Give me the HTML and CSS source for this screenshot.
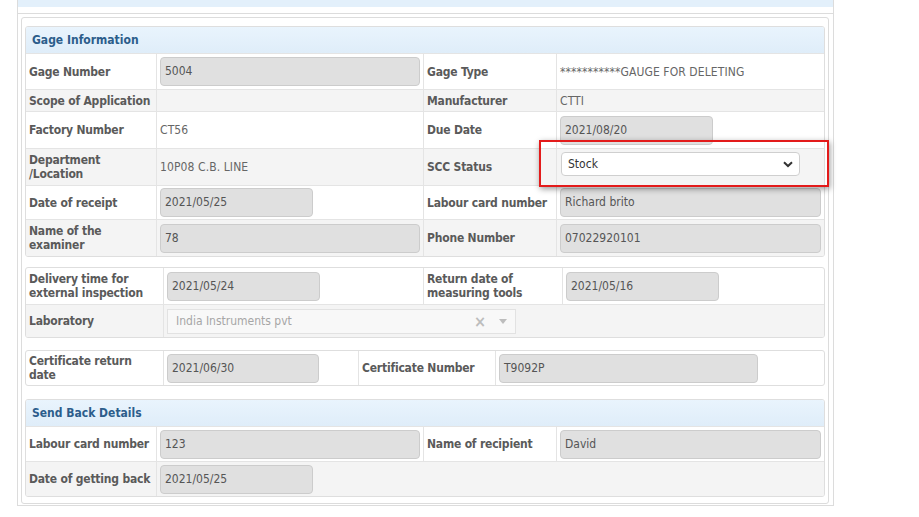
FILE: index.html
```html
<!DOCTYPE html>
<html>
<head>
<meta charset="utf-8">
<title>Gage Information</title>
<link rel="stylesheet" href="styles.css">
</head>
<body>
<div class="panel">
  <div class="panel-head"></div>
  <div class="panel-body">
    <div class="inner">

      <div class="box">
        <table class="grid">
          <colgroup><col class="w130"><col class="w267"><col class="w133"><col></colgroup>
          <tr class="hd"><th colspan="4">Gage Information</th></tr>
          <tr class="h36">
            <td class="lb">Gage Number</td>
            <td><div class="inp">5004</div></td>
            <td class="lb">Gage Type</td>
            <td class="tx">***********GAUGE FOR DELETING</td>
          </tr>
          <tr class="alt h22">
            <td class="lb nw">Scope of Application</td>
            <td class="tx"></td>
            <td class="lb">Manufacturer</td>
            <td class="tx">CTTI</td>
          </tr>
          <tr class="h37">
            <td class="lb">Factory Number</td>
            <td class="tx">CT56</td>
            <td class="lb">Due Date</td>
            <td><div class="inp date">2021/08/20</div></td>
          </tr>
          <tr class="alt h37">
            <td class="lb">Department<br>/Location</td>
            <td class="tx">10P08 C.B. LINE</td>
            <td class="lb">SCC Status</td>
            <td class="top"><div class="sel">Stock<svg class="chev" viewBox="0 0 10 7" width="10" height="7"><path d="M1 1.2 L5 5 L9 1.2" fill="none" stroke="#333" stroke-width="2"/></svg></div></td>
          </tr>
          <tr class="h34">
            <td class="lb">Date of receipt</td>
            <td><div class="inp date">2021/05/25</div></td>
            <td class="lb nw">Labour card number</td>
            <td><div class="inp">Richard brito</div></td>
          </tr>
          <tr class="alt h37">
            <td class="lb">Name of the<br>examiner</td>
            <td><div class="inp">78</div></td>
            <td class="lb">Phone Number</td>
            <td><div class="inp">07022920101</div></td>
          </tr>
        </table>
      </div>

      <div class="box gap10">
        <table class="grid">
          <colgroup><col class="w137"><col class="w260"><col class="w139"><col></colgroup>
          <tr class="h36 first">
            <td class="lb">Delivery time for<br>external inspection</td>
            <td><div class="inp date">2021/05/24</div></td>
            <td class="lb">Return date of<br>measuring tools</td>
            <td><div class="inp date">2021/05/16</div></td>
          </tr>
          <tr class="alt h33">
            <td class="lb">Laboratory</td>
            <td colspan="3">
              <div class="lab">
                <span class="lab-text">India Instruments pvt</span>
                <span class="lab-x">×</span>
                <span class="lab-arrow"></span>
              </div>
            </td>
          </tr>
        </table>
      </div>

      <div class="box gap12">
        <table class="grid">
          <colgroup><col class="w137"><col class="w195"><col class="w137"><col></colgroup>
          <tr class="h34 first">
            <td class="lb">Certificate return<br>date</td>
            <td><div class="inp wide">2021/06/30</div></td>
            <td class="lb nw">Certificate Number</td>
            <td><div class="inp cert">T9092P</div></td>
          </tr>
        </table>
      </div>

      <div class="box gap13">
        <table class="grid">
          <colgroup><col class="w130"><col class="w267"><col class="w133"><col></colgroup>
          <tr class="hd"><th colspan="4">Send Back Details</th></tr>
          <tr class="h35">
            <td class="lb nw">Labour card number</td>
            <td><div class="inp">123</div></td>
            <td class="lb">Name of recipient</td>
            <td><div class="inp">David</div></td>
          </tr>
          <tr class="alt h35">
            <td class="lb nw">Date of getting back</td>
            <td colspan="3"><div class="inp date">2021/05/25</div></td>
          </tr>
        </table>
      </div>

    </div>
  </div>
</div>
<div class="highlight"></div>
</body>
</html>
```

FILE: styles.css
```css
* { box-sizing: border-box; }

body {
  margin: 0;
  background: #ffffff;
  font-family: "DejaVu Sans Condensed", "DejaVu Sans", sans-serif;
  font-stretch: semi-condensed;
  font-size: 12px;
  color: #5a5a5a;
}

.panel {
  margin-left: 17px;
  width: 817px;
  border: 1px solid #dcdcdc;
  border-top: 0;
}

.panel-head {
  height: 7px;
  background: #e3f0fb;
}

.panel-body {
  margin-top: 6px;
  border-top: 1px solid #dcdcdc;
  padding-top: 3px;
  padding-bottom: 1px;
}

.inner {
  margin-left: 3px;
  width: 808px;
  border: 1px solid #dcdcdc;
  border-radius: 3px;
  padding: 8px 3px 6px 3px;
}

.box {
  border: 1px solid #dedede;
  border-radius: 3px;
  overflow: hidden;
}
.gap10 { margin-top: 10px; }
.gap12 { margin-top: 12px; }
.gap13 { margin-top: 13px; }

.grid {
  width: 100%;
  table-layout: fixed;
  border-collapse: separate;
  border-spacing: 0;
}

.w130 { width: 130px; }
.w267 { width: 267px; }
.w133 { width: 133px; }
.w137 { width: 137px; }
.w260 { width: 260px; }
.w139 { width: 139px; }
.w195 { width: 195px; }

.grid td {
  border-left: 1px solid #e4e4e4;
  border-top: 1px solid #e4e4e4;
  padding: 2px 3px;
  vertical-align: middle;
}
.grid td:first-child { border-left: 0; }
.grid tr.first td { border-top: 0; }
.grid td.top { vertical-align: top; padding-top: 3px; }

.h22 td { height: 22px; }
.h33 td { height: 33px; }
.h34 td { height: 34px; }
.h35 td { height: 35px; }
.h36 td { height: 36px; }
.h37 td { height: 37px; }

.grid tr.alt td { background: #f4f4f4; }

.hd th {
  height: 26px;
  padding: 0 6px;
  text-align: left;
  font-weight: bold;
  font-size: 12px;
  color: #2c5d8b;
  background: linear-gradient(#e9f4fd, #dfedf9);
}

.lb {
  font-weight: bold;
  line-height: 14px;
  letter-spacing: -0.2px;
  color: #5a5a5a;
}
.lb.nw { white-space: nowrap; padding-right: 0; }

.tx {
  color: #666666;
  line-height: 14px;
  letter-spacing: 0.1px;
}

.inp {
  height: 29px;
  width: 100%;
  background: #e0e0e0;
  border: 1px solid #cccccc;
  border-radius: 4px;
  padding: 0 4px;
  line-height: 27px;
  color: #555555;
  white-space: nowrap;
}
.inp.date { width: 153px; }
.inp.wide { width: 152px; }
.inp.cert { width: 259px; }

.sel {
  margin-left: 1px;
  width: 239px;
  height: 24px;
  background: #ffffff;
  border: 1px solid #cfcfcf;
  border-radius: 4px;
  padding: 0 6px;
  line-height: 22px;
  color: #333333;
  display: flex;
  align-items: center;
  justify-content: space-between;
}
.chev { display: block; }

.lab {
  width: 349px;
  height: 25px;
  background: #f8f8f8;
  border: 1px solid #e2e2e2;
  display: flex;
  align-items: center;
  padding: 0 8px;
  color: #a6a6a6;
}
.lab-text { flex: 1; }
.lab-x {
  font-size: 16px;
  font-weight: bold;
  color: #bdbdbd;
  margin-right: 13px;
}
.lab-arrow {
  width: 0;
  height: 0;
  border-left: 4px solid transparent;
  border-right: 4px solid transparent;
  border-top: 5px solid #bdbdbd;
}

.highlight {
  position: absolute;
  left: 539px;
  top: 140px;
  width: 290px;
  height: 47px;
  border: 2px solid #e31b1b;
  box-shadow: 1px 2px 6px rgba(0, 0, 0, 0.4);
}
```
